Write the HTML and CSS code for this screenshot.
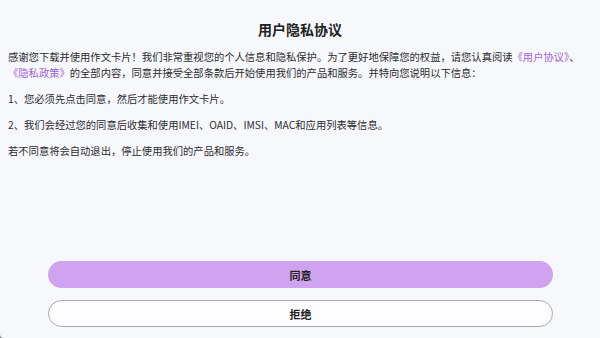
FILE: index.html
```html
<!DOCTYPE html>
<html lang="zh-CN">
<head>
  <meta charset="utf-8">
  <title>用户隐私协议</title>
  <link rel="stylesheet" href="styles.css">
</head>
<body>
  <div class="sheet">
    <h1 class="title">用户隐私协议</h1>

    <div class="content">
      <p>感谢您下载并使用作文卡片！我们非常重视您的个人信息和隐私保护。为了更好地保障您的权益，请您认真阅读<a href="#">《用户协议》</a>、<br><a href="#">《隐私政策》</a>的全部内容，同意并接受全部条款后开始使用我们的产品和服务。并特向您说明以下信息：</p>
      <p>1、您必须先点击同意，然后才能使用作文卡片。</p>
      <p>2、我们会经过您的同意后收集和使用IMEI、OAID、IMSI、MAC和应用列表等信息。</p>
      <p>若不同意将会自动退出，停止使用我们的产品和服务。</p>
    </div>

    <div class="actions">
      <button class="btn agree">同意</button>
      <button class="btn refuse">拒绝</button>
    </div>
  </div>
</body>
</html>
```

FILE: styles.css
```css
* {
  box-sizing: border-box;
}

html {
  background: #8a8a8e;
}

body {
  margin: 0;
  height: 100vh;
  font-family: "Noto Sans CJK SC", "Noto Sans", sans-serif;
  color: #2b2b2f;
}

.sheet {
  height: 100%;
  display: flex;
  flex-direction: column;
  background: #f7f8fc;
  border-bottom-left-radius: 4px;
}

.title {
  margin: 0;
  padding-top: 19px;
  font-size: 14px;
  line-height: 20px;
  font-weight: bold;
  text-align: center;
  color: #222;
}

.content {
  flex: 1;
  padding: 0 8px;
  margin-top: 10px;
}

.content p {
  margin: 0 0 10px;
  font-size: 10.3px;
  line-height: 16px;
}

.content a {
  color: #a262d9;
  text-decoration: none;
}

.actions {
  display: flex;
  flex-direction: column;
  gap: 12px;
  padding: 0 47px 11px 48px;
}

.btn {
  height: 27px;
  border-radius: 14px;
  font-family: inherit;
  font-size: 11px;
  font-weight: bold;
  color: #222;
  cursor: pointer;
}

.agree {
  border: none;
  background: #cfa3ef;
}

.refuse {
  border: 1px solid #a9a9ad;
  background: #fdfdff;
}
```
